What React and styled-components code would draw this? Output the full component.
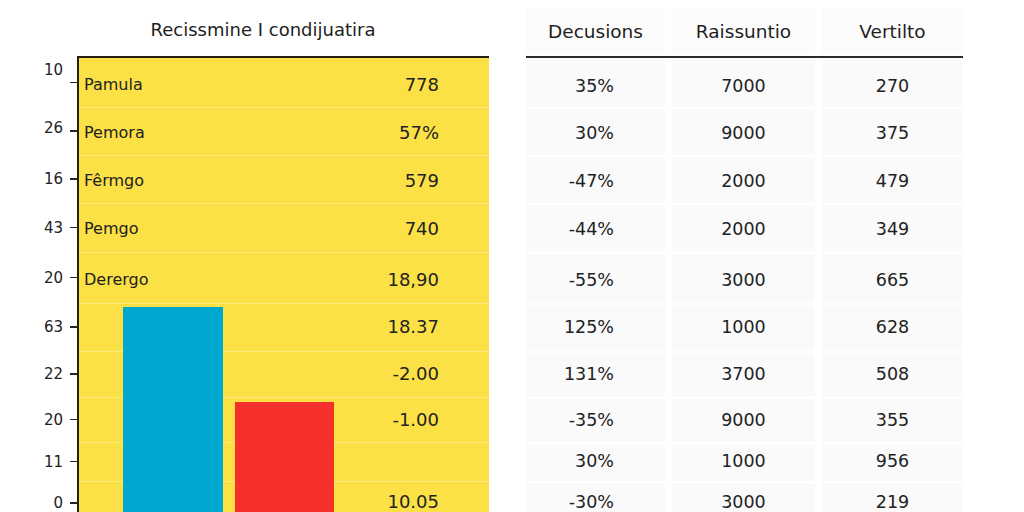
import React from "react";
import styled, { createGlobalStyle } from "styled-components";

const Global = createGlobalStyle`
  html, body { margin: 0; padding: 0; background: #ffffff; overflow: hidden; }
  body { font-family: "DejaVu Sans", "Noto Sans", sans-serif; color: #222; }
  #root { width: 1024px; height: 512px; overflow: hidden; }
`;

const ROW_H = [49, 48, 48, 49, 51, 48, 46, 45, 39, 44];

const rows = [
  { axis: "10", label: "Pamula", value: "778", d: "35%", r: "7000", v: "270", axisShift: -13, ty: 2 },
  { axis: "26", label: "Pemora", value: "57%", d: "30%", r: "9000", v: "375", axisShift: -3, ty: 1 },
  { axis: "16", label: "Fêrmgo", value: "579", d: "-47%", r: "2000", v: "479", ty: 1 },
  { axis: "43", label: "Pemgo", value: "740", d: "-44%", r: "2000", v: "349" },
  { axis: "20", label: "Derergo", value: "18,90", d: "-55%", r: "3000", v: "665", ty: 1 },
  { axis: "63", label: "", value: "18.37", d: "125%", r: "1000", v: "628", ty: -1 },
  { axis: "22", label: "", value: "-2.00", d: "131%", r: "3700", v: "508", ty: -1 },
  { axis: "20", label: "", value: "-1.00", d: "-35%", r: "9000", v: "355", ty: -1 },
  { axis: "11", label: "", value: "", d: "30%", r: "1000", v: "956", ty: -2 },
  { axis: "0", label: "", value: "10.05", d: "-30%", r: "3000", v: "219", ty: -2 },
];

const Page = styled.div`
  display: flex;
  align-items: flex-start;
  width: 1024px;
`;

const Left = styled.section`
  width: 526px;
  display: flex;
  flex-direction: column;
`;

const Title = styled.h1`
  margin: 0;
  height: 56px;
  display: flex;
  align-items: center;
  justify-content: center;
  padding-top: 3px;
  box-sizing: border-box;
  font-size: 18px;
  font-weight: 400;
  color: #1e1e1e;
`;

const Chart = styled.div`
  display: grid;
  grid-template-columns: 77px 412px;
`;

const Axis = styled.div`
  display: flex;
  flex-direction: column;
  padding-top: 2px;
`;

const AxisRow = styled.div`
  height: ${(p) => p.$h}px;
  display: flex;
  align-items: center;
  justify-content: flex-end;
  gap: 7px;
`;

const AxisLabel = styled.span`
  font-size: 15px;
  color: #222;
  transform: translateY(${(p) => p.$shift || 0}px);
`;

const Tick = styled.span`
  width: 7px;
  height: 1.5px;
  background: #222;
`;

const Plot = styled.div`
  position: relative;
  background: #fbe145;
  border-left: 2px solid #221f10;
  border-top: 2px solid #221f10;
  display: flex;
  flex-direction: column;
`;

const PlotRow = styled.div`
  height: ${(p) => p.$h}px;
  box-sizing: border-box;
  border-top: ${(p) => (p.$first ? "none" : "1.5px solid rgba(255,245,170,0.55)")};
  display: flex;
  align-items: center;
  justify-content: space-between;
  padding: 0 50px 0 5px;
  color: #222;
  & > span {
    transform: translateY(${(p) => p.$ty || 0}px);
  }
`;

const Label = styled.span`
  font-size: 16px;
`;

const Value = styled.span`
  font-size: 18px;
`;

const Bar = styled.div`
  position: absolute;
  bottom: -20px;
  left: ${(p) => p.$left}px;
  width: ${(p) => p.$w}px;
  top: ${(p) => p.$top}px;
  background: ${(p) => p.$color};
`;

const Right = styled.section`
  width: 437px;
  display: flex;
  flex-direction: column;
`;

const Grid = styled.div`
  display: grid;
  grid-template-columns: 139px 143px 141px;
  column-gap: 7px;
`;

const Head = styled.div`
  margin-top: 8px;
  margin-bottom: 2px;
  height: 46px;
  display: flex;
  align-items: center;
  justify-content: center;
  font-size: 18.5px;
  color: #1e1e1e;
  background: #fcfcfc;
`;

const HeadRule = styled.div`
  grid-column: 1 / -1;
  height: 2px;
  background: #2a2a2a;
`;

const Cell = styled.div`
  height: ${(p) => p.$h}px;
  box-sizing: border-box;
  border-top: 2px solid #ffffff;
  background: #fafafa;
  display: flex;
  align-items: center;
  justify-content: ${(p) => (p.$right ? "flex-end" : "center")};
  padding-right: ${(p) => (p.$right ? "51px" : "0")};
  font-size: 17.5px;
  color: #222;
  & > span {
    transform: translateY(${(p) => p.$ty || 0}px);
  }
`;

export default function App() {
  return (
    <>
      <Global />
      <Page>
        <Left>
          <Title>Recissmine I condijuatira</Title>
          <Chart>
            <Axis>
              {rows.map((r, i) => (
                <AxisRow key={i} $h={ROW_H[i]}>
                  <AxisLabel $shift={r.axisShift}>{r.axis}</AxisLabel>
                  <Tick />
                </AxisRow>
              ))}
            </Axis>
            <Plot>
              {rows.map((r, i) => (
                <PlotRow key={i} $h={ROW_H[i]} $first={i === 0} $ty={r.ty}>
                  <Label>{r.label}</Label>
                  <Value>{r.value}</Value>
                </PlotRow>
              ))}
              <Bar $left={44} $w={100} $top={249} $color="#00a7cf" />
              <Bar $left={156} $w={99} $top={344} $color="#f52f2a" />
            </Plot>
          </Chart>
        </Left>
        <Right>
          <Grid>
            <Head>Decusions</Head>
            <Head>Raissuntio</Head>
            <Head>Vertilto</Head>
            <HeadRule />
            {rows.map((r, i) => (
              <React.Fragment key={i}>
                <Cell $h={ROW_H[i]} $ty={r.ty} $right><span>{r.d}</span></Cell>
                <Cell $h={ROW_H[i]} $ty={r.ty}><span>{r.r}</span></Cell>
                <Cell $h={ROW_H[i]} $ty={r.ty}><span>{r.v}</span></Cell>
              </React.Fragment>
            ))}
          </Grid>
        </Right>
      </Page>
    </>
  );
}
